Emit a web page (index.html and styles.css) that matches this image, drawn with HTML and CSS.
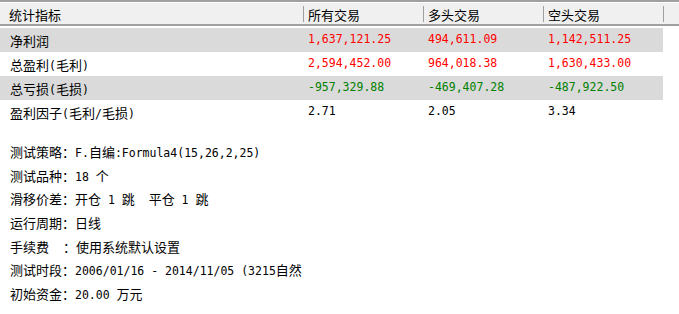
FILE: index.html
```html
<!DOCTYPE html>
<html lang="zh-CN">
<head>
<meta charset="utf-8">
<title>统计指标</title>
<link rel="stylesheet" href="styles.css">
</head>
<body>
<div class="head">
  <div class="hc first">统计指标</div>
  <div class="hc">所有交易</div>
  <div class="hc">多头交易</div>
  <div class="hc">空头交易</div>
  <div class="hc rest"></div>
</div>
<div class="rows">
  <div class="row alt">
    <div class="c first">净利润</div>
    <div class="c m red">1,637,121.25</div>
    <div class="c m red">494,611.09</div>
    <div class="c m red">1,142,511.25</div>
  </div>
  <div class="row">
    <div class="c first">总盈利<span class="m">(</span>毛利<span class="m">)</span></div>
    <div class="c m red">2,594,452.00</div>
    <div class="c m red">964,018.38</div>
    <div class="c m red">1,630,433.00</div>
  </div>
  <div class="row alt">
    <div class="c first">总亏损<span class="m">(</span>毛损<span class="m">)</span></div>
    <div class="c m green">-957,329.88</div>
    <div class="c m green">-469,407.28</div>
    <div class="c m green">-487,922.50</div>
  </div>
  <div class="row">
    <div class="c first">盈利因子<span class="m">(</span>毛利<span class="m">/</span>毛损<span class="m">)</span></div>
    <div class="c m">2.71</div>
    <div class="c m">2.05</div>
    <div class="c m">3.34</div>
  </div>
</div>
<div class="info">
  <p>测试策略：<span class="m">F.</span>自编<span class="m">:Formula4(15,26,2,25)</span></p>
  <p>测试品种：<span class="m">18 </span>个</p>
  <p>滑移价差：开仓<span class="m"> 1 </span>跳<span class="m">  </span>平仓<span class="m"> 1 </span>跳</p>
  <p>运行周期：日线</p>
  <p>手续费<span class="m">  </span>：使用系统默认设置</p>
  <p>测试时段：<span class="m">2006/01/16 - 2014/11/05 (3215</span>自然</p>
  <p>初始资金：<span class="m">20.00 </span>万元</p>
</div>
</body>
</html>
```
FILE: styles.css
```css
html, body {
  margin: 0;
  padding: 0;
}
body {
  width: 679px;
  height: 314px;
  overflow: hidden;
  background: #ffffff;
  color: #000000;
  font-family: "Noto Sans CJK SC", sans-serif;
  font-size: 13px;
}
.m {
  font-family: "DejaVu Sans Mono", monospace;
  font-size: 11.5px;
  line-height: 1;
  white-space: pre;
}
.head {
  display: grid;
  grid-template-columns: 304px 120px 120px 120px 1fr;
  height: 22px;
  border-top: 2px solid #a0a0a0;
  border-bottom: 2px solid #a0a0a0;
  background: #f0f0f0;
  box-shadow: inset 0 1px #ffffff;
  margin-bottom: 2px;
}
.hc {
  margin: 4px 0 2px;
  border-right: 1px solid #a0a0a0;
  display: flex;
  align-items: center;
  padding-left: 4px;
  white-space: nowrap;
  overflow: hidden;
}
.hc.first {
  padding-left: 9px;
}
.hc.rest {
  border-right: none;
}
.rows {
  width: 663px;
}
.row {
  display: grid;
  grid-template-columns: 304px 120px 120px 119px;
  height: 24px;
  align-items: center;
}
.row.alt {
  background: #dadada;
}
.c {
  padding-left: 4px;
  white-space: nowrap;
}
.c.first {
  padding-left: 10px;
}
.red {
  color: #ff0000;
}
.green {
  color: #008000;
}
.info {
  padding: 16px 0 0 10px;
}
.info p {
  margin: 0;
  height: 23.67px;
  line-height: 23.67px;
  white-space: nowrap;
}
```
